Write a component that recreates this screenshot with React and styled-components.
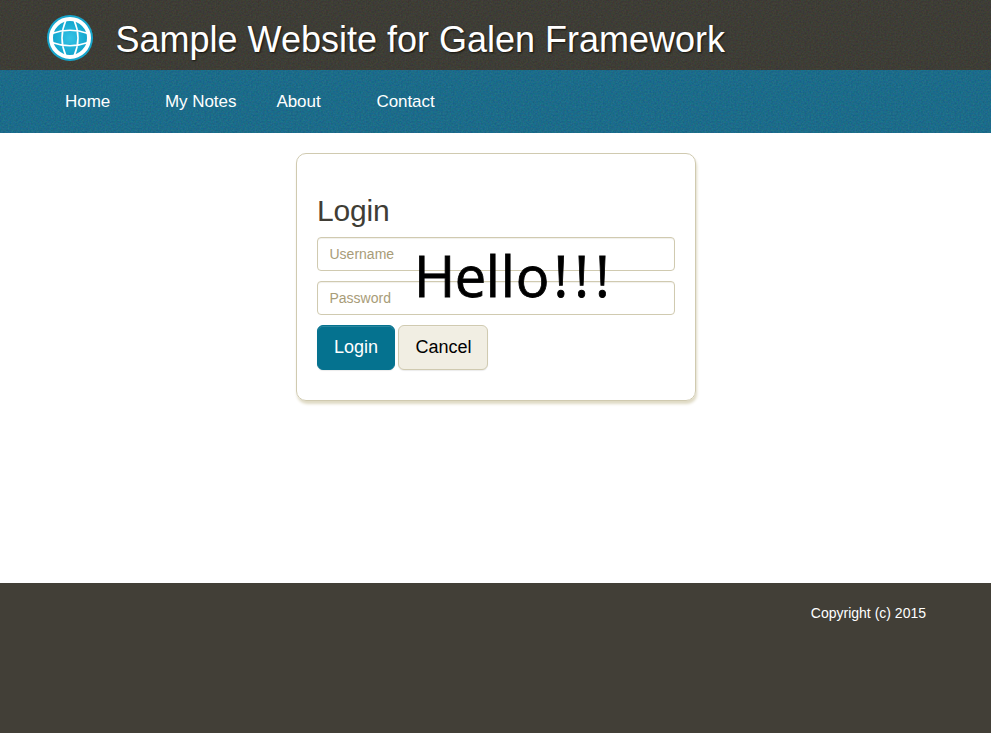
import React from "react";
import styled, { createGlobalStyle } from "styled-components";

const noise = (opacity) =>
  `url("data:image/svg+xml,${encodeURIComponent(
    `<svg xmlns='http://www.w3.org/2000/svg' width='150' height='150'><filter id='n' x='0' y='0' width='100%' height='100%' color-interpolation-filters='sRGB'><feTurbulence type='fractalNoise' baseFrequency='0.6' numOctaves='2' stitchTiles='stitch'/><feColorMatrix values='1 0 0 0 0  0 1 0 0 0  0 0 1 0 0  0 0 0 0 1'/></filter><rect width='150' height='150' filter='url(#n)' opacity='${opacity}'/></svg>`
  )}")`;

const GlobalStyle = createGlobalStyle`
  * { box-sizing: border-box; }
  body {
    margin: 0;
    background: #fff;
    color: #403d35;
    font-family: "Liberation Sans", Arial, sans-serif;
  }
`;

const Page = styled.div`
  display: flex;
  flex-direction: column;
  height: 733px;
  overflow: hidden;
`;

const Header = styled.header`
  display: flex;
  align-items: flex-start;
  height: 70px;
  padding: 14px 0 0 46px;
  gap: 21.5px;
  background: ${noise(0.12)} #34332b;
`;

const Title = styled.h1`
  margin: 4px 0 0;
  font-size: 36px;
  line-height: 44px;
  font-weight: 400;
  color: #fff;
  white-space: nowrap;
  text-shadow: 1px 1px 2px #14120c;
`;

const Nav = styled.nav`
  display: flex;
  height: 63px;
  padding: 0 45px;
  background: ${noise(0.15)} #0b678b;
`;

const NavLink = styled.a`
  flex: none;
  min-width: 100px;
  padding: 20px 20px 0;
  font-size: 17px;
  line-height: 23px;
  letter-spacing: -0.05px;
  color: #fff;
  text-decoration: none;
  white-space: nowrap;
`;

const Main = styled.main`
  flex: 1;
  padding-top: 20px;
`;

const LoginCard = styled.form`
  position: relative;
  display: flex;
  flex-direction: column;
  width: 400px;
  height: 248px;
  margin-left: 296px;
  padding: 39px 20px 0;
  border: 1px solid #d0cab0;
  border-radius: 10px;
  box-shadow: 1px 3px 3px #dfdac4;
`;

const Heading = styled.h2`
  margin: 0 0 8px;
  font-size: 30px;
  line-height: 36px;
  font-weight: 400;
  letter-spacing: -0.2px;
`;

const Field = styled.input`
  height: 34px;
  margin-bottom: 10px;
  padding: 0 12px 0 11.5px;
  border: 1px solid #d0cab0;
  border-radius: 4px;
  box-shadow: inset 0 1px 1px rgba(120, 110, 60, 0.1);
  font: 14px "Liberation Sans", Arial, sans-serif;
  &::placeholder { color: #a89c78; opacity: 1; }
`;

const Actions = styled.div`
  display: flex;
  gap: 3px;
`;

const Button = styled.button`
  width: ${(p) => (p.$primary ? 78 : 90)}px;
  height: 45px;
  padding: 0 0 0 ${(p) => (p.$primary ? 0 : 1)}px;
  border: 1px solid ${(p) => (p.$primary ? "#05728f" : "#d0cab0")};
  border-radius: 6px;
  background: ${(p) => (p.$primary ? "#05728f" : "#f1eee3")};
  color: ${(p) => (p.$primary ? "#fff" : "#000")};
  font: 18px "Liberation Sans", Arial, sans-serif;
  box-shadow: inset 0 1px 0 rgba(255, 255, 255, 0.15), 0 1px 1px rgba(0, 0, 0, 0.08);
`;

const Greeting = styled.div`
  position: absolute;
  left: 117px;
  top: 79px;
  font: 56px/84px "Open Sans", sans-serif;
  color: #000;
  white-space: nowrap;
  pointer-events: none;
  -webkit-text-stroke: 0.8px #000;
`;

const Tracked = styled.span`
  letter-spacing: ${(p) => p.$space}px;
`;

const Footer = styled.footer`
  height: 150px;
  padding: 20px 65px 0;
  background: #423f37;
  color: #fff;
  font-size: 14px;
  line-height: 20px;
  text-align: right;
`;

const Globe = () => (
  <svg width="48" height="48" viewBox="0 0 48 48" fill="none">
    <defs>
      <radialGradient id="sea">
        <stop offset="0" stopColor="#35c3e6" />
        <stop offset="1" stopColor="#0fa3cb" />
      </radialGradient>
    </defs>
    <circle cx="24" cy="24" r="23" fill="#17a5cc" />
    <circle cx="24" cy="24" r="19" fill="url(#sea)" stroke="#fff" strokeWidth="4" />
    <path
      d="M20 6Q12 24 20 42M28 6Q36 24 28 42M6 19.5Q24 13 42 19.5M6 28.5Q24 35 42 28.5"
      stroke="#fff"
      strokeWidth="1.6"
    />
  </svg>
);

const links = ["Home", "My Notes", "About", "Contact"];

export default function App() {
  return (
    <Page>
      <GlobalStyle />
      <Header>
        <Globe />
        <Title>Sample Website for Galen Framework</Title>
      </Header>
      <Nav>
        {links.map((label) => (
          <NavLink key={label}>{label}</NavLink>
        ))}
      </Nav>
      <Main>
        <LoginCard>
          <Heading>Login</Heading>
          <Field placeholder="Username" />
          <Field type="password" placeholder="Password" />
          <Actions>
            <Button type="button" $primary>Login</Button>
            <Button type="button">Cancel</Button>
          </Actions>
          <Greeting>
            <Tracked $space={-0.5}>He</Tracked>
            <Tracked $space={0.9}>ll</Tracked>
            <Tracked $space={4}>o</Tracked>
            <Tracked $space={6}>!!!</Tracked>
          </Greeting>
        </LoginCard>
      </Main>
      <Footer>Copyright (c) 2015</Footer>
    </Page>
  );
}
